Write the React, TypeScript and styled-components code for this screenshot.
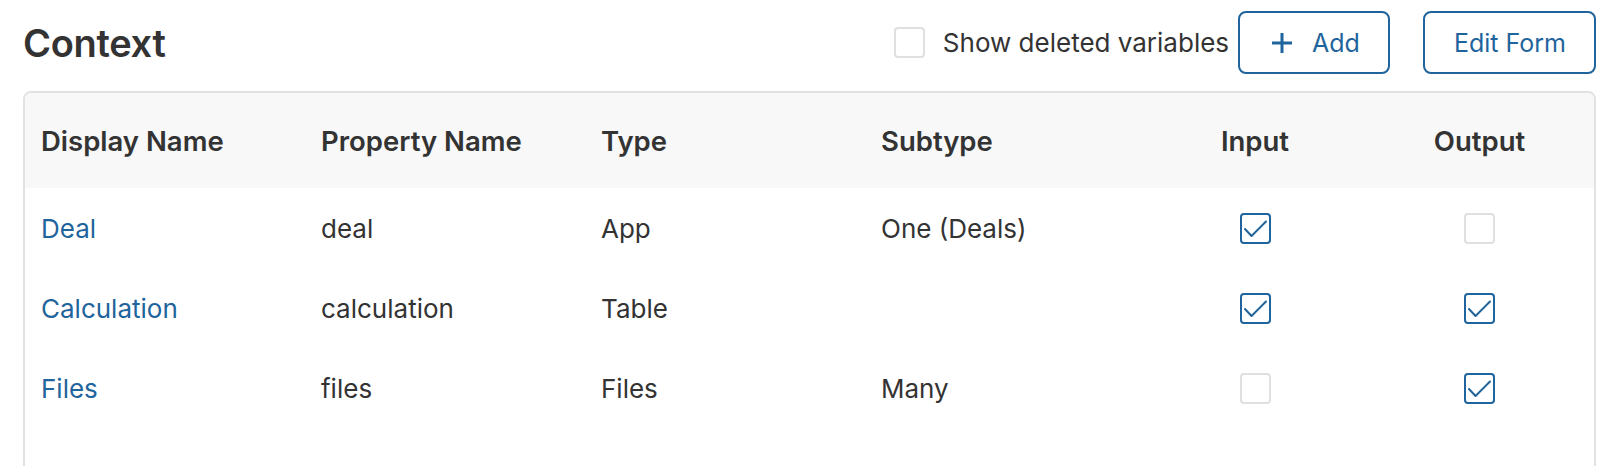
import styled, { createGlobalStyle } from 'styled-components';

const GlobalStyle = createGlobalStyle`
    body {
        margin: 0;
        background: #ffffff;
        font-family: Inter, "Noto Sans", sans-serif;
        color: #333333;
    }
`;

interface Variable {
    displayName: string
    propertyName: string
    type: string
    subtype: string
    input: boolean
    output: boolean
}

const variables: Variable[] = [
    {displayName: 'Deal', propertyName: 'deal', type: 'App', subtype: 'One (Deals)', input: true, output: false},
    {displayName: 'Calculation', propertyName: 'calculation', type: 'Table', subtype: '', input: true, output: true},
    {displayName: 'Files', propertyName: 'files', type: 'Files', subtype: 'Many', input: false, output: true},
];

const CheckMark = () => (
    <svg width="31" height="31" viewBox="0 0 31 31" fill="none">
        <path d="M5 16L11.5 23L26 8.5" stroke="#1f649c" strokeWidth="2" strokeLinecap="round" strokeLinejoin="round"/>
    </svg>
);

const Checkbox: React.FunctionComponent<{checked?: boolean}> = ({checked}) => (
    <Box $checked={!!checked}>
        {checked && <CheckMark/>}
    </Box>
);

const PlusIcon = () => (
    <svg width="22" height="22" viewBox="0 0 22 22">
        <path d="M11 1V21M1 11H21" stroke="#1f649c" strokeWidth="3"/>
    </svg>
);

const App = () => {
    return (
        <Page>
            <GlobalStyle/>
            <Header>
                <Title>Context</Title>
                <Actions>
                    <CheckLabel>
                        <Checkbox/>
                        <span>Show deleted variables</span>
                    </CheckLabel>
                    <Button $padLeft={31}>
                        <PlusIcon/>
                        Add
                    </Button>
                    <Button $padLeft={29} $gap={33}>Edit Form</Button>
                </Actions>
            </Header>
            <Card>
                <HeadRow>
                    <Cell>Display Name</Cell>
                    <Cell>Property Name</Cell>
                    <Cell>Type</Cell>
                    <Cell>Subtype</Cell>
                    <Cell $center>Input</Cell>
                    <Cell $center>Output</Cell>
                </HeadRow>
                {variables.map((v) => (
                    <Row key={v.propertyName}>
                        <Cell><NameLink>{v.displayName}</NameLink></Cell>
                        <Cell>{v.propertyName}</Cell>
                        <Cell>{v.type}</Cell>
                        <Cell>{v.subtype}</Cell>
                        <Cell $center><Checkbox checked={v.input}/></Cell>
                        <Cell $center><Checkbox checked={v.output}/></Cell>
                    </Row>
                ))}
            </Card>
        </Page>
    );
}

const Page = styled.div`
    padding: 11px 18px 0 23px;
`;

const Header = styled.div`
    display: flex;
    align-items: center;
    justify-content: space-between;
    height: 63px;
`;

const Title = styled.h1`
    margin: 0;
    font-size: 38px;
    font-weight: 600;
    letter-spacing: -0.3px;
    color: #333333;
`;

const Actions = styled.div`
    display: flex;
    align-items: center;
`;

const CheckLabel = styled.label`
    display: flex;
    align-items: center;
    gap: 18px;
    font-size: 26px;
    color: #333333;
    margin-right: 9px;
`;

const Box = styled.span<{$checked: boolean}>`
    display: inline-flex;
    box-sizing: border-box;
    width: 31px;
    height: 31px;
    border: 2px solid ${({$checked}) => ($checked ? '#1f649c' : '#e0e0e0')};
    border-radius: 4px;
    background: #ffffff;
    svg {
        margin: -2px;
    }
`;

const Button = styled.button<{$padLeft: number, $gap?: number}>`
    display: flex;
    align-items: center;
    gap: 19px;
    height: 63px;
    box-sizing: border-box;
    padding: 0 28px 0 ${({$padLeft}) => $padLeft}px;
    margin-left: ${({$gap}) => ($gap ? `${$gap}px` : '0')};
    border: 2px solid #1f649c;
    border-radius: 8px;
    background: #ffffff;
    color: #1f649c;
    font-family: Inter, "Noto Sans", sans-serif;
    font-size: 25px;
    cursor: pointer;
`;

const Card = styled.div`
    margin-top: 17px;
    border: 2px solid #e2e2e2;
    border-radius: 8px;
    min-height: 380px;
    overflow: hidden;
`;

const Grid = styled.div`
    display: grid;
    grid-template-columns: 280px 280px 280px 280px 220px 1fr;
    align-items: center;
`;

const HeadRow = styled(Grid)`
    height: 95px;
    background: #f8f8f8;
    font-weight: 600;
    font-size: 27.5px;
    color: #333333;
`;

const Row = styled(Grid)`
    height: 80px;
    font-size: 26px;
    color: #333333;
`;

const Cell = styled.div<{$center?: boolean}>`
    display: flex;
    align-items: center;
    justify-content: ${({$center}) => ($center ? 'center' : 'flex-start')};
    padding-left: ${({$center}) => ($center ? '0' : '16px')};
`;

const NameLink = styled.a`
    color: #1f649c;
    text-decoration: none;
    cursor: pointer;
`;

export default App;
